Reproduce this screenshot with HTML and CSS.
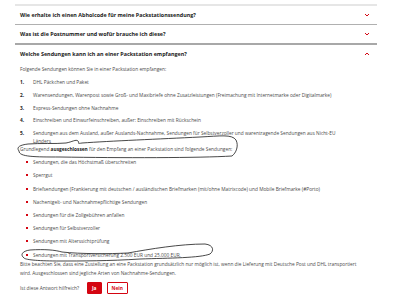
FILE: index.html
```html
<!DOCTYPE html>
<html lang="de">
<head>
    <meta charset="UTF-8">
    <meta name="viewport" content="width=device-width, initial-scale=1.0">
    <title>Packstation FAQ</title>
    <link rel="stylesheet" href="styles.css">
</head>
<body>
    <div class="faq">
        <div class="faq-item">
            <div class="question">
                <span>Wie erhalte ich einen Abholcode für meine Packstationssendung?</span>
                <svg class="chevron" viewBox="0 0 6 4"><path d="M1 1 L3 3 L5 1"/></svg>
            </div>
        </div>
        <div class="faq-item second">
            <div class="question">
                <span>Was ist die Postnummer und wofür brauche ich diese?</span>
                <svg class="chevron" viewBox="0 0 6 4"><path d="M1 1 L3 3 L5 1"/></svg>
            </div>
        </div>
        <div class="faq-item open">
            <div class="question">
                <span>Welche Sendungen kann ich an einer Packstation empfangen?</span>
                <svg class="chevron" viewBox="0 0 6 4"><path d="M1 3 L3 1 L5 3"/></svg>
            </div>
            <div class="answer">
                <p class="intro">Folgende Sendungen können Sie in einer Packstation empfangen:</p>
                <ol class="allowed">
                    <li><span class="num">1.</span><span>DHL Päckchen und Paket</span></li>
                    <li><span class="num">2.</span><span>Warensendungen, Warenpost sowie Groß- und Maxibriefe ohne Zusatzleistungen (Freimachung mit Internetmarke oder Digitalmarke)</span></li>
                    <li><span class="num">3.</span><span>Express-Sendungen ohne Nachnahme</span></li>
                    <li><span class="num">4.</span><span>Einschreiben und Einwurfeinschreiben, außer: Einschreiben mit Rückschein</span></li>
                    <li><span class="num">5.</span><span>Sendungen aus dem Ausland, außer Auslands-Nachnahme, Sendungen für Selbstverzoller und warentragende Sendungen aus Nicht-EU Länders</span></li>
                </ol>
                <p class="excluded">Grundlegend <strong>ausgeschlossen</strong> für den Empfang an einer Packstation sind folgende Sendungen:</p>
                <ul class="denied">
                    <li>Sendungen, die das Höchstmaß überschreiten</li>
                    <li>Sperrgut</li>
                    <li>Briefsendungen (Frankierung mit deutschen / ausländischen Briefmarken (mit/ohne Matrixcode) und Mobile Briefmarke (#Porto)</li>
                    <li>Nachentgelt- und Nachnahmepflichtige Sendungen</li>
                    <li>Sendungen für die Zollgebühren anfallen</li>
                    <li>Sendungen für Selbstverzoller</li>
                    <li>Sendungen mit Alterssichtprüfung</li>
                    <li>Sendungen mit Transportversicherung 2.500 EUR und 25.000 EUR.</li>
                </ul>
                <p class="note">Bitte beachten Sie, dass eine Zustellung an eine Packstation grundsätzlich nur möglich ist, wenn die Lieferung mit Deutsche Post und DHL transportiert wird. Ausgeschlossen sind jegliche Arten von Nachnahme-Sendungen.</p>
                <div class="feedback">
                    <span>Ist diese Antwort hilfreich?</span>
                    <button class="btn yes">Ja</button>
                    <button class="btn no">Nein</button>
                </div>
            </div>
        </div>
    </div>

    <!-- hand drawn marks on top of the screenshot -->
    <svg class="ink" viewBox="0 0 400 294">
        <path d="M19 151 C16 147 20 145 28 144 C40 143 55 144 66 143 C72 142 76 139 78 141 C80 143 76 144 82 143 C110 141 160 139 200 137 C220 136 232 134 236 140 C239 146 236 153 232 156 C200 158 120 158 60 157 C35 157 19 157 19 151"/>
        <path d="M24 258 C20 255 22 251 30 250 C45 249 55 250 62 252 C80 254 110 254 128 253 C150 249 180 244 205 244 C214 245 214 251 210 254 C200 258 170 258 140 259 C110 261 80 261 60 261 C40 261 26 260 24 258"/>
    </svg>
</body>
</html>
```

FILE: styles.css
```css
body {
    margin: 0;
    font-family: "Open Sans", "Noto Sans", sans-serif;
    color: #4a4a4a;
    background: #fff;
    position: relative;
    width: 400px;
    height: 294px;
    overflow: hidden;
}
.faq {
    margin: 4px 23px 0 15px;
    border-top: 2px solid #e6e6e6;
}
.question {
    display: flex;
    align-items: center;
    justify-content: space-between;
    height: 18px;
    padding: 0 7px 0 5px;
    font-size: 5.4px;
    font-weight: bold;
    color: #1a1a1a;
}
.faq-item {
    border-bottom: 1px solid #b0b0b0;
}
.faq-item.second {
    border-bottom: 2px solid #a8a8a8;
}
.faq-item.open {
    border-bottom: none;
}
.chevron {
    width: 6px;
    height: 4px;
    fill: none;
    stroke: #d40511;
    stroke-width: 1;
}
.answer {
    padding: 2px 12px 0 5px;
    font-size: 4.8px;
    line-height: 8px;
}
.answer p {
    margin: 0;
}
.intro {
    margin-bottom: 5px !important;
}
.allowed {
    list-style: none;
    margin: 0;
    padding: 0 15px 0 0;
    display: flex;
    flex-direction: column;
    gap: 4.8px;
}
.allowed li {
    display: flex;
}
.num {
    width: 13px;
    flex-shrink: 0;
    font-weight: bold;
    color: #1a1a1a;
}
.excluded strong {
    color: #1a1a1a;
}
.denied {
    list-style: none;
    margin: 5px 0 0;
    padding: 0;
    display: flex;
    flex-direction: column;
    gap: 5.2px;
}
.denied li {
    padding-left: 13px;
    position: relative;
}
.denied li::before {
    content: "";
    position: absolute;
    left: 6px;
    top: 3px;
    width: 2px;
    height: 2px;
    background: #d40511;
}
.note {
    margin-top: 1px !important;
    line-height: 9.5px;
}
.feedback {
    display: flex;
    align-items: center;
    margin-top: 3px;
    gap: 5px;
}
.feedback span {
    margin-right: 3px;
}
.btn {
    font-family: inherit;
    font-size: 4.8px;
    font-weight: bold;
    height: 12px;
    padding: 0 4px;
    border-radius: 1px;
    border: 1px solid #d40511;
}
.yes {
    background: #d40511;
    color: #fff;
}
.no {
    background: #fff;
    color: #d40511;
}
.ink {
    position: absolute;
    left: 0;
    top: 0;
    width: 400px;
    height: 294px;
    fill: none;
    stroke: #1a1a1a;
    stroke-width: 0.8;
    pointer-events: none;
}
```
